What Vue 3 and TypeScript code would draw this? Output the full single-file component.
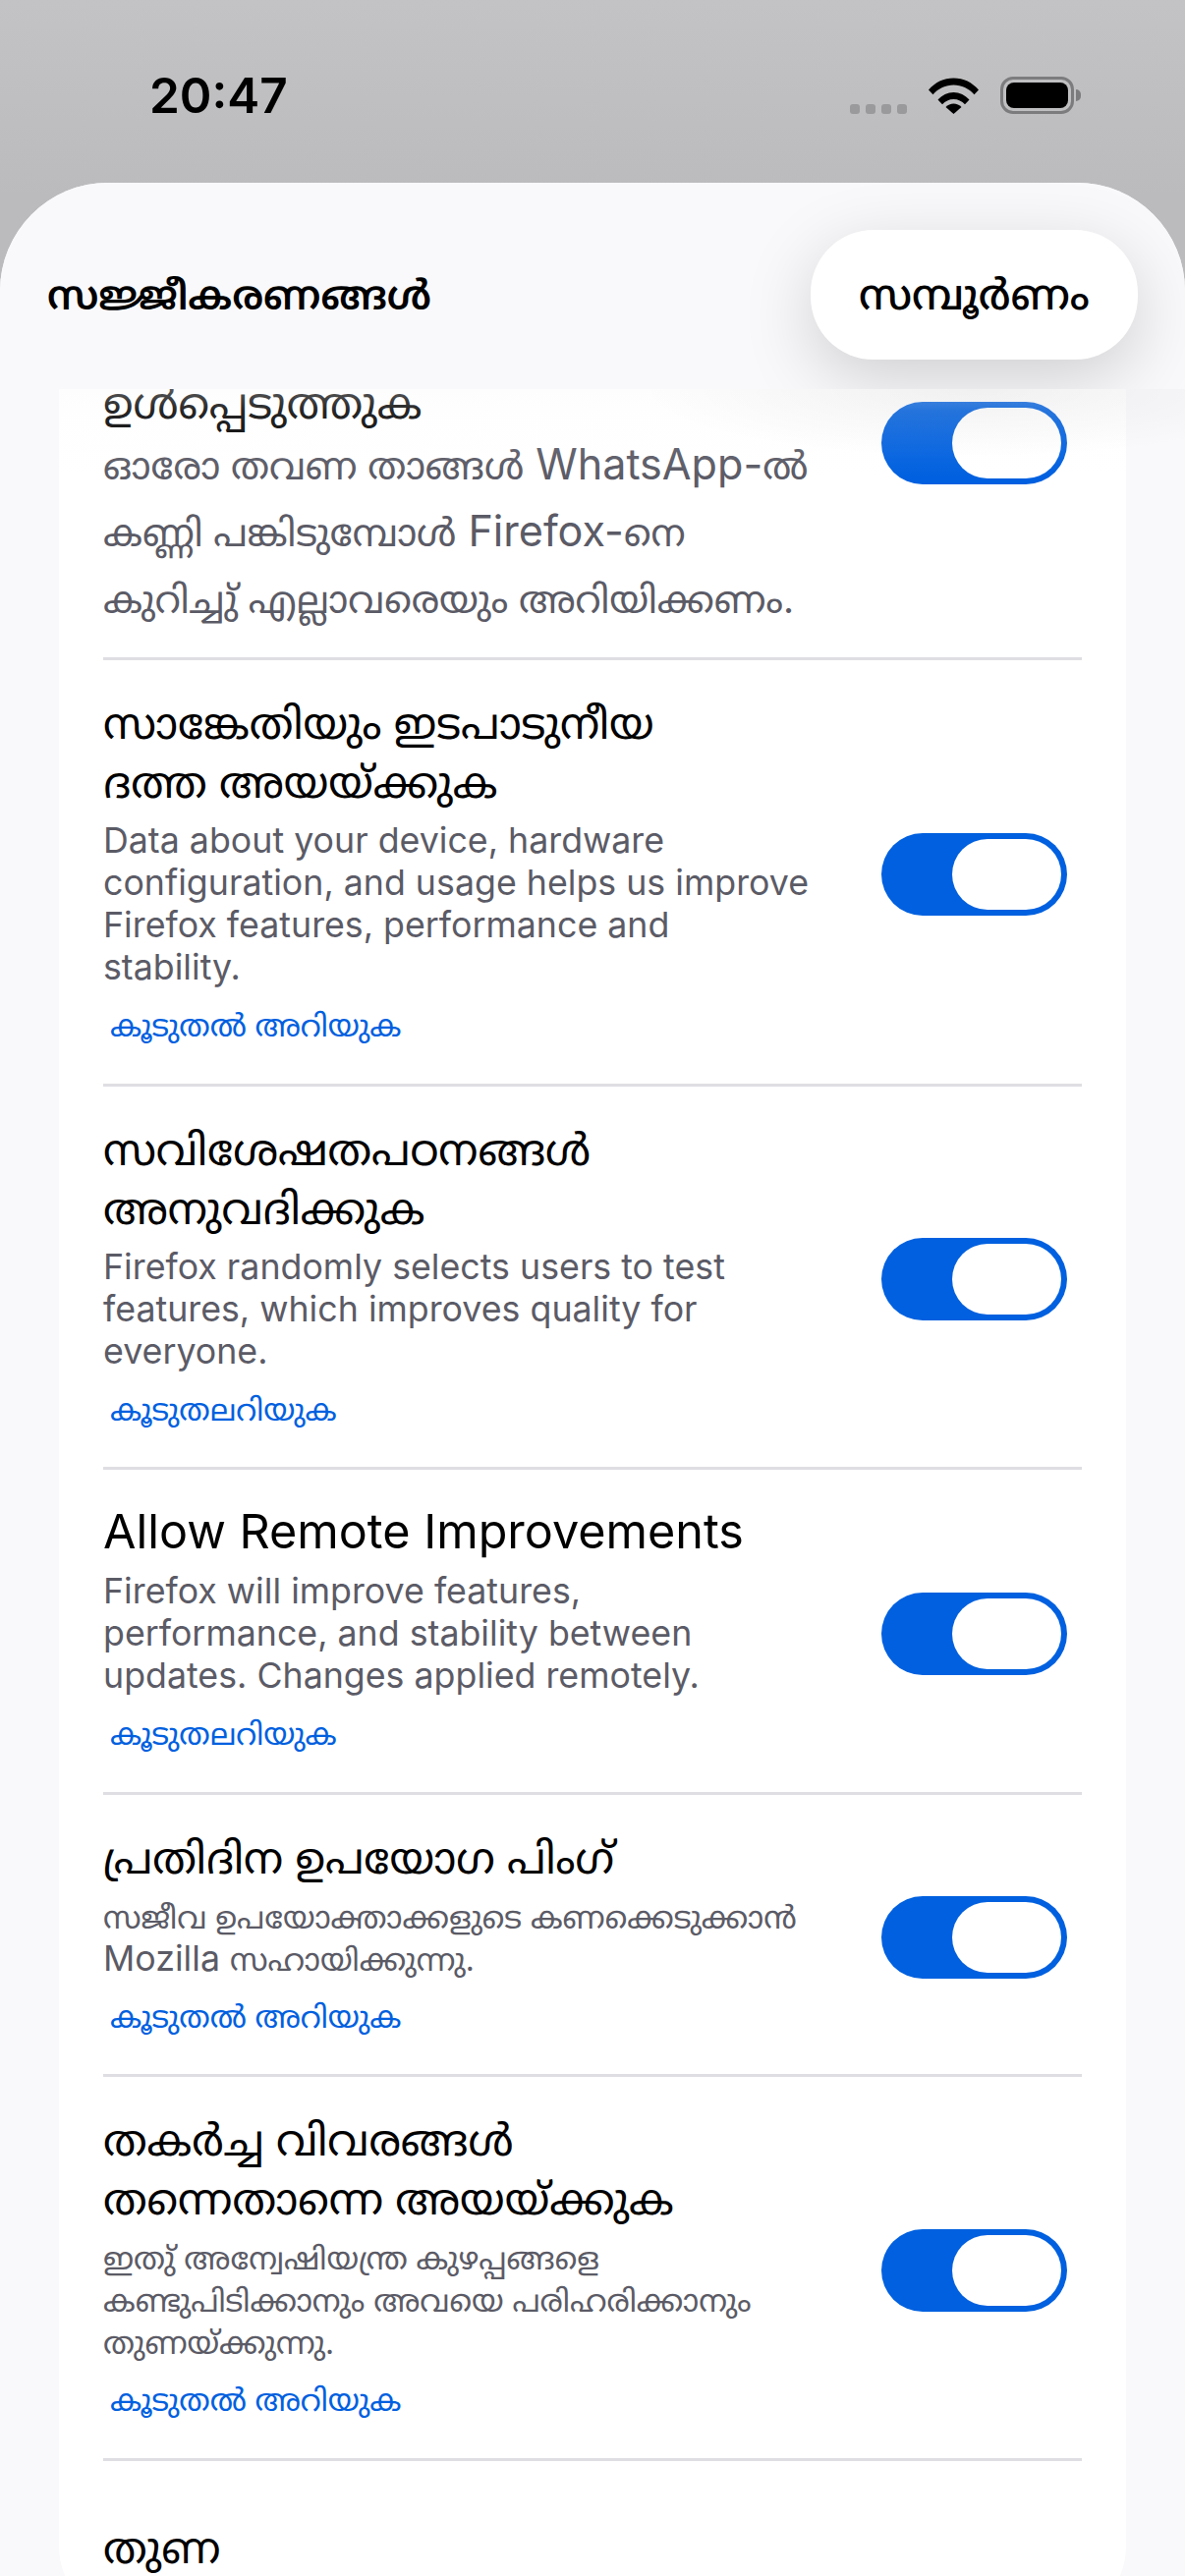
<script setup lang="ts">
interface SettingRow {
  title: string[];
  desc: string[];
  link?: string;
}

const more = "കൂടുതൽ അറിയുക";
const moreJoined = "കൂടുതലറിയുക";

const rows: SettingRow[] = [
  {
    title: ["ഉൾപ്പെടുത്തുക"],
    desc: [
      "ഓരോ തവണ താങ്ങൾ WhatsApp-ൽ",
      "കണ്ണി പങ്കിടുമ്പോൾ Firefox-നെ",
      "കുറിച്ചു് എല്ലാവരെയും അറിയിക്കണം.",
    ],
  },
  {
    title: ["സാങ്കേതിയും ഇടപാടുനീയ", "ദത്ത അയയ്ക്കുക"],
    desc: [
      "Data about your device, hardware",
      "configuration, and usage helps us improve",
      "Firefox features, performance and",
      "stability.",
    ],
    link: more,
  },
  {
    title: ["സവിശേഷതപഠനങ്ങൾ", "അനുവദിക്കുക"],
    desc: [
      "Firefox randomly selects users to test",
      "features, which improves quality for",
      "everyone.",
    ],
    link: moreJoined,
  },
  {
    title: ["Allow Remote Improvements"],
    desc: [
      "Firefox will improve features,",
      "performance, and stability between",
      "updates. Changes applied remotely.",
    ],
    link: moreJoined,
  },
  {
    title: ["പ്രതിദിന ഉപയോഗ പിംഗ്"],
    desc: ["സജീവ ഉപയോക്താക്കളുടെ കണക്കെടുക്കാൻ", "Mozilla സഹായിക്കുന്നു."],
    link: more,
  },
  {
    title: ["തകർച്ച വിവരങ്ങൾ", "തന്നെതാന്നെ അയയ്ക്കുക"],
    desc: [
      "ഇതു് അന്വേഷിയന്ത്ര കുഴപ്പങ്ങളെ",
      "കണ്ടുപിടിക്കാനും അവയെ പരിഹരിക്കാനും",
      "തുണയ്ക്കുന്നു.",
    ],
    link: more,
  },
];

// latin runs look bigger than the malayalam ones next to them
function runs(line: string) {
  return line
    .split(/([\x20-\x7e]*[A-Za-z][\x20-\x7e]*)/)
    .filter((s) => s !== "")
    .map((text) => ({ text, latin: /[A-Za-z]/.test(text) }));
}
</script>

<template>
  <div class="screen">
    <div class="status">
      <span class="time">20:47</span>
      <div class="status-icons">
        <div class="signal"><i></i><i></i><i></i><i></i></div>
        <svg class="wifi" width="51" height="37" viewBox="0 0 51 37">
          <path d="M0 12.500C6.500 4.800 15.500 0.500 25.500 0.500S44.500 4.800 51 12.500l-4.500 4.800C41 11 33.500 7.500 25.500 7.500S10 11 4.500 17.300z" fill="#000" />
          <path d="M9.500 22.500C13.500 18 19.500 15 25.500 15s12 3 16 7.500L37 27.300C34 24 30 22 25.500 22S17 24 14 27.300z" fill="#000" />
          <path d="M17.500 30c2-2.200 5-3.500 8-3.500s6 1.300 8 3.500l-8 7z" fill="#000" />
        </svg>
        <div class="battery">
          <div class="battery-body"><div class="battery-fill"></div></div>
          <div class="battery-cap"></div>
        </div>
      </div>
    </div>

    <div class="sheet">
      <header class="sheet-head">
        <span class="head-title">സജ്ജീകരണങ്ങൾ</span>
        <button class="done">സമ്പൂർണം</button>
      </header>
      <div class="head-fade"></div>

      <div class="scroll">
        <div class="card">
          <div v-for="(row, i) in rows" :key="i" class="row" :class="{ first: i === 0 }">
            <div class="row-text">
              <div class="row-title">
                <div v-for="line in row.title" :key="line">
                  <span v-for="r in runs(line)" :key="r.text" :class="{ lat: r.latin }">{{ r.text }}</span>
                </div>
              </div>
              <div class="row-desc">
                <div v-for="line in row.desc" :key="line">
                  <span v-for="r in runs(line)" :key="r.text" :class="{ lat: r.latin }">{{ r.text }}</span>
                </div>
              </div>
              <a v-if="row.link" class="row-link">{{ row.link }}</a>
            </div>
            <div class="toggle"><div class="knob"></div></div>
          </div>
          <div class="row last">
            <div class="row-title">തുണ</div>
          </div>
        </div>
      </div>
    </div>
  </div>
</template>

<style>
html,
body {
  margin: 0;
  padding: 0;
  background: #c2c2c4;
}
</style>

<style scoped>
.screen {
  width: 1206px;
  height: 2622px;
  overflow: hidden;
  background: linear-gradient(#c3c3c5, #bbbbbd 200px);
  font-family: Inter, "Noto Sans", "Noto Sans Malayalam", "DejaVu Sans", sans-serif;
  display: flex;
  flex-direction: column;
}

.status {
  height: 186px;
  flex: none;
  box-sizing: border-box;
  padding: 67px 106px 0 152px;
  display: flex;
  justify-content: space-between;
  align-items: flex-start;
}

.time {
  font-size: 49.500px;
  line-height: 60px;
  font-weight: 600;
  color: #000;
}

.status-icons {
  display: flex;
  align-items: flex-end;
  gap: 22px;
  margin-top: 11px;
}

.signal {
  display: flex;
  gap: 6px;
}

.signal i {
  width: 10px;
  height: 10px;
  border-radius: 3px;
  background: #9a9a9c;
}

.battery {
  display: flex;
  align-items: center;
}

.battery-body {
  width: 75px;
  height: 38px;
  box-sizing: border-box;
  border: 3px solid #7c7c7e;
  border-radius: 13px;
  padding: 3px;
}

.battery-fill {
  height: 100%;
  background: #000;
  border-radius: 8px;
}

.battery-cap {
  width: 5px;
  height: 12px;
  margin-left: 2px;
  background: #7c7c7e;
  border-radius: 0 5px 5px 0;
}

.sheet {
  flex: 1;
  min-height: 0;
  position: relative;
  background: #f9f9fb;
  border-radius: 110px 110px 0 0;
  overflow: hidden;
  display: flex;
  flex-direction: column;
}

.sheet-head {
  flex: none;
  height: 210px;
  box-sizing: border-box;
  padding: 48px 48px 0 48px;
  display: flex;
  justify-content: space-between;
  align-items: flex-start;
  background: #f9f9fb;
  overflow: hidden;
  position: relative;
  z-index: 2;
}

.head-title {
  font-size: 40.500px;
  line-height: 134px;
  font-weight: 600;
  color: #000;
}

.done {
  width: 333px;
  height: 132px;
  border: 0;
  border-radius: 64px;
  background: #fff;
  box-shadow: 0 20px 70px rgba(0, 0, 0, 0.17);
  font: inherit;
  font-size: 43px;
  font-weight: 500;
  color: #000;
  padding: 4px 0 0;
}

.head-fade {
  position: absolute;
  left: 0;
  right: 0;
  top: 210px;
  height: 90px;
  z-index: 1;
  background:
    radial-gradient(ellipse 340px 70px at 990px 0, rgba(0, 0, 0, 0.05), rgba(0, 0, 0, 0)),
    linear-gradient(rgba(249, 249, 251, 0.35), rgba(249, 249, 251, 0.15) 25%, rgba(249, 249, 251, 0));
}

.scroll {
  flex: 1;
  min-height: 0;
  overflow: hidden;
  padding: 0 60px;
}

.card {
  background: #fff;
  border-radius: 0 0 76px 76px;
  padding: 0 45px;
  margin-top: -163px;
}

.row {
  display: flex;
  align-items: center;
  justify-content: space-between;
  border-bottom: 3px solid #dedee3;
  padding: 34px 0 32.500px;
}

.row.first {
  padding: 25px 0;
  height: 439px;
  box-sizing: border-box;
}

.row.first .row-text {
  align-self: flex-end;
}

.row.first .row-desc {
  margin-top: 0;
  font-size: 38.500px;
  line-height: 68px;
}

.row.first .row-desc .lat {
  font-size: 1.120em;
}

.row.last {
  border-bottom: 0;
  padding: 58px 0 45px;
}

.row-text {
  min-width: 0;
}

.row-title {
  font-size: 44px;
  line-height: 60px;
  color: #000;
  white-space: nowrap;
}

.row-title .lat {
  font-size: 48.500px;
  line-height: 1;
}

.row-desc {
  margin-top: 9px;
  font-size: 31.500px;
  line-height: 43px;
  color: #5b5b66;
  white-space: nowrap;
}

.row-desc .lat {
  font-size: 1.135em;
  line-height: 1;
}

.row-link {
  display: block;
  margin-top: 11px;
  padding-left: 7px;
  font-size: 31px;
  line-height: 52px;
  color: #0060df;
}

.toggle {
  flex: none;
  width: 189px;
  height: 84px;
  margin-top: 4px;
  margin-right: 15px;
  box-sizing: border-box;
  padding: 6px;
  border-radius: 42px;
  background: #0060df;
  display: flex;
  justify-content: flex-end;
}

.row.first .toggle {
  margin-top: 0;
}

.knob {
  width: 111px;
  height: 72px;
  border-radius: 36px;
  background: #fff;
}
</style>
